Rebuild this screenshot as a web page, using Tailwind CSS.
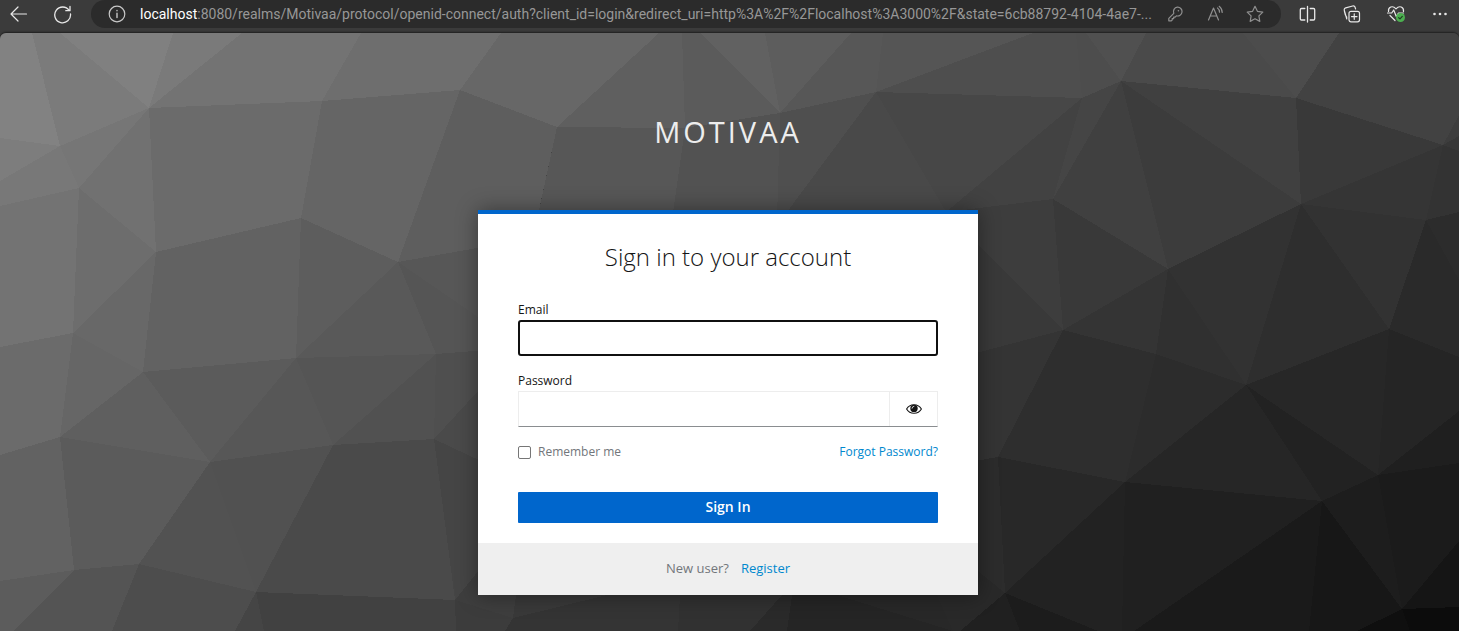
<!DOCTYPE html>
<html lang="en">
<head>
<meta charset="utf-8">
<meta name="viewport" content="width=device-width, initial-scale=1">
<title>Sign in to Motivaa</title>
<script src="https://cdn.jsdelivr.net/npm/@tailwindcss/browser@4"></script>
</head>
<body class="flex min-h-screen flex-col bg-[#3b3b3b] font-['Open_Sans',sans-serif]">

<header class="flex h-[33px] shrink-0 items-start text-[#e8e8e8]">
  <div class="flex h-7 w-[91px] shrink-0 items-center gap-6 pl-2">
    <button type="button" aria-label="Back">
      <svg class="size-5" viewBox="0 0 20 20" fill="none" stroke="currentColor" stroke-width="1.2" stroke-linecap="round" stroke-linejoin="round"><path d="M18.500 10H3M10 3L3 10l7 7"/></svg>
    </button>
    <button type="button" aria-label="Refresh">
      <svg class="size-5" viewBox="0 0 20 20" fill="none" stroke="currentColor" stroke-width="1.300" stroke-linecap="round" stroke-linejoin="round"><path d="M17.200 6.500A7.900 7.900 0 1 0 18.500 10M18 2.500v4.200h-4.200"/></svg>
    </button>
  </div>
  <div class="flex h-7 min-w-0 flex-1 items-center rounded-[14px] bg-[#2b2b2b] pr-4 pl-4">
    <button type="button" aria-label="View site information" class="mr-[13px] shrink-0 text-[#c8c8c8]">
      <svg class="size-5" viewBox="0 0 20 20" fill="none" stroke="currentColor" stroke-width="1.200" stroke-linecap="round"><circle cx="10" cy="10" r="7.800"/><path d="M10 9.200V13.500M10 6.500v.3" stroke-width="1.400"/></svg>
    </button>
    <p class="min-w-0 flex-1 truncate font-['Roboto',sans-serif] text-sm text-[#979797]"><span class="text-white">localhost</span>:8080/realms/Motivaa/protocol/openid-connect/auth?client_id=login&amp;redirect_uri=http%3A%2F%2Flocalhost%3A3000%2F&amp;state=6cb88792-4104-4ae7-...</p>
    <div class="flex shrink-0 items-center gap-5 pl-2 text-[#8f8f8f]">
      <button type="button" aria-label="Password manager">
        <svg class="size-5" viewBox="0 0 20 20" fill="none" stroke="currentColor" stroke-width="1.200" stroke-linejoin="round"><path d="M12.300 3.200a4.400 4.400 0 1 1-.9 8.600l-1.300 1.300H8.700v1.500H7.200v1.500l-.8.700H3.800v-2.500l5-5a4.400 4.400 0 0 1 3.500-6.100z"/><circle cx="13.400" cy="6.700" r=".8" fill="currentColor" stroke="none"/></svg>
      </button>
      <button type="button" aria-label="Read aloud">
        <svg class="size-5" viewBox="0 0 20 20" fill="none" stroke="currentColor" stroke-width="1.200" stroke-linecap="round" stroke-linejoin="round"><path d="M3.500 16L8.500 4l5 12M5.200 12h6.600M12.500 4c1.300 1 2 2.500 2 4.200M14.200 2.300c2 1.600 3 3.600 3 6.200"/></svg>
      </button>
      <button type="button" aria-label="Add to favorites">
        <svg class="size-5" viewBox="0 0 20 20" fill="none" stroke="currentColor" stroke-width="1.200" stroke-linejoin="round"><path d="M10 2.300l2.400 5 5.400.8-3.900 3.800.9 5.500-4.800-2.600-4.800 2.600.9-5.500L2.200 8.100l5.400-.8z"/></svg>
      </button>
    </div>
  </div>
  <div class="flex h-7 shrink-0 items-center gap-6 pr-[9px] pl-[17px]">
    <button type="button" aria-label="Split screen">
      <svg class="size-5" viewBox="0 0 20 20" fill="none" stroke="currentColor" stroke-width="1.300" stroke-linecap="round" stroke-linejoin="round"><path d="M9.500 2.500v15.500M6.800 4.500H3.500a1.200 1.200 0 0 0-1.200 1.200v9.100a1.200 1.200 0 0 0 1.200 1.200h3.300M12.200 4.500h3.300a1.200 1.200 0 0 1 1.200 1.200v9.100a1.200 1.200 0 0 1-1.200 1.200h-3.300"/></svg>
    </button>
    <button type="button" aria-label="Collections">
      <svg class="size-5" viewBox="0 0 20 20" fill="none" stroke="currentColor" stroke-width="1.200" stroke-linecap="round" stroke-linejoin="round"><rect x="7" y="7.300" width="10.500" height="10.500" rx="2"/><path d="M12.250 9.800v5.500M9.500 12.550h5.500M4.800 15L2.300 6.300a2 2 0 0 1 1.400-2.500l7-1.800a2 2 0 0 1 2.400 1.300l.5 1.700M2.300 6.300c.5 3 .5 5.200 2.500 7"/></svg>
    </button>
    <button type="button" aria-label="Browser essentials">
      <svg class="size-5" viewBox="0 0 20 20" fill="none" stroke="currentColor" stroke-width="1.200" stroke-linecap="round" stroke-linejoin="round"><path d="M2.500 7.500C2 3 6.500 1 10 4.800 13.500 1 18 3 17.500 7.500M4 11.500l5 5M1.500 9h4.200l2-3 2.600 6.500 2.200-3.500h5"/><circle cx="14.500" cy="13.500" r="4.500" fill="#4caf50" stroke="none"/><path d="M12.700 13.700l1.300 1.200 2.300-2.500" stroke="#1f3d20"/></svg>
    </button>
    <button type="button" aria-label="Settings and more">
      <svg class="size-5" viewBox="0 0 20 20" fill="currentColor"><circle cx="4.500" cy="10" r="1.300"/><circle cx="10" cy="10" r="1.300"/><circle cx="15.500" cy="10" r="1.300"/></svg>
    </button>
  </div>
</header>

<main class="relative isolate flex flex-1 flex-col items-center overflow-hidden rounded-t-md bg-[#444] pt-[79px] pr-[3px] pb-9 shadow-[0_-1px_2px_rgba(0,0,0,0.5)]">
  <!-- low-poly backdrop -->
  <svg class="absolute inset-0 -z-10 size-full" viewBox="0 33 1459 598" preserveAspectRatio="none" shape-rendering="crispEdges" aria-hidden="true">
    <path fill="#828282" d="M0 33H32L60 146 0 138z"/>
    <path fill="#7b7b7b" d="M32 33H60L149 108 60 146z"/>
    <path fill="#808080" d="M60 33H173L149 108z"/>
    <path fill="#7a7a7a" d="M173 33H242L149 108z"/>
    <path fill="#737373" d="M242 33H361L322 101 149 108z"/>
    <path fill="#6e6e6e" d="M361 33H501L460 90 322 101z"/>
    <path fill="#7d7d7d" d="M60 146L0 138V181z"/>
    <path fill="#787878" d="M60 146L79 188 0 206V181z"/>
    <path fill="#767676" d="M149 108L60 146 79 188z"/>
    <path fill="#717171" d="M149 108L79 188 156 252z"/>
    <path fill="#6d6d6d" d="M79 188L156 252 73 333z"/>
    <path fill="#737373" d="M79 188L73 333 0 347V206z"/>
    <path fill="#6b6b6b" d="M149 108L156 252 301 218 322 101z"/>
    <path fill="#656565" d="M322 101L460 90 398 262 301 218z"/>
    <path fill="#5e5e5e" d="M460 90L398 262 478 248 539 210 557 127z"/>
    <path fill="#686868" d="M156 252L73 333 143 372z"/>
    <path fill="#6b6b6b" d="M73 333L0 347V455L60 437z"/>
    <path fill="#666" d="M73 333L143 372 60 437z"/>
    <path fill="#626262" d="M156 252L301 218 296 358 143 372z"/>
    <path fill="#5d5d5d" d="M301 218L398 262 296 358z"/>
    <path fill="#595959" d="M398 262L296 358 436 354z"/>
    <path fill="#555" d="M398 262L436 354 500 349V332z"/>
    <path fill="#575757" d="M398 262L500 244V332z"/>
    <path fill="#5b5b5b" d="M143 372L296 358 210 462z"/>
    <path fill="#5f5f5f" d="M143 372L60 437 210 462z"/>
    <path fill="#575757" d="M296 358L210 462 333 445z"/>
    <path fill="#555" d="M296 358L436 354 333 445z"/>
    <path fill="#515151" d="M436 354L333 445 434 439z"/>
    <path fill="#4f4f4f" d="M436 354L434 439 500 367V349z"/>
    <path fill="#4a4a4a" d="M434 439L500 367V470z"/>
    <path fill="#5b5b5b" d="M60 437L210 462 139 564 74 570z"/>
    <path fill="#626262" d="M60 437L74 570 0 581V455z"/>
    <path fill="#5c5c5c" d="M74 570L0 581V631H13z"/>
    <path fill="#545454" d="M74 570L139 564 112 631H13z"/>
    <path fill="#525252" d="M210 462L139 564 256 592z"/>
    <path fill="#515151" d="M210 462L333 445 256 592z"/>
    <path fill="#4a4a4a" d="M333 445L434 439 455 600 256 592z"/>
    <path fill="#4d4d4d" d="M139 564L256 592 235 631H112z"/>
    <path fill="#454545" d="M256 592L235 631H264z"/>
    <path fill="#414141" d="M256 592L455 600 456 631H264z"/>
    <path fill="#454545" d="M434 439L500 470V544L455 600z"/>
    <path fill="#3e3e3e" d="M455 600L500 544V595H516L513 618z"/>
    <path fill="#3c3c3c" d="M455 600L513 618 505 631H456z"/>
    <path fill="#393939" d="M516 595H607L513 618z"/>
    <path fill="#343434" d="M513 618L607 595H680L678 631H505z"/>
    <path fill="#313131" d="M680 595H782L750 631H678z"/>
    <path fill="#2a2a2a" d="M782 595H792L787 631H750z"/>
    <path fill="#252525" d="M792 595H837L953 631H787z"/>
    <path fill="#282828" d="M837 595H937L953 631z"/>
    <path fill="#676767" d="M501 33H659L557 127 460 90z"/>
    <path fill="#5f5f5f" d="M659 33H682L685 128 557 127z"/>
    <path fill="#5b5b5b" d="M682 33H700L780 113 685 128z"/>
    <path fill="#616161" d="M700 33H765L780 113z"/>
    <path fill="#5d5d5d" d="M765 33H851L780 113z"/>
    <path fill="#575757" d="M851 33H883L876 92 780 113z"/>
    <path fill="#555" d="M883 33H1033L876 92z"/>
    <path fill="#4e4e4e" d="M1033 33H1076L1082 98 876 92z"/>
    <path fill="#4d4d4d" d="M1076 33H1086L1121 81 1082 98z"/>
    <path fill="#505050" d="M1086 33H1146L1121 81z"/>
    <path fill="#4a4a4a" d="M1146 33H1243L1296 98 1121 81z"/>
    <path fill="#4c4c4c" d="M1243 33H1339L1296 98z"/>
    <path fill="#424242" d="M1339 33H1459V115L1443 145 1296 98z"/>
    <path fill="#3d3d3d" d="M1443 145L1459 115V136z"/>
    <path fill="#373737" d="M1443 145L1459 136V151z"/>
    <path fill="#575757" d="M557 127L685 128 672 220H537z"/>
    <path fill="#525252" d="M685 128L780 113 777 220H672z"/>
    <path fill="#4f4f4f" d="M780 113L876 92 781 220H777z"/>
    <path fill="#494949" d="M876 92L781 220H946V212z"/>
    <path fill="#474747" d="M876 92L1082 98 946 212z"/>
    <path fill="#424242" d="M1082 98L946 212 1053 199z"/>
    <path fill="#454545" d="M1082 98L1121 81 1053 199z"/>
    <path fill="#404040" d="M1121 81L1053 199 1168 269z"/>
    <path fill="#3c3c3c" d="M1121 81L1168 269 1301 204z"/>
    <path fill="#404040" d="M1121 81L1301 204 1296 98z"/>
    <path fill="#393939" d="M1296 98L1443 145 1301 204z"/>
    <path fill="#353535" d="M1443 145L1301 204 1426 220z"/>
    <path fill="#333" d="M1443 145L1426 220 1459 212V151z"/>
    <path fill="#2c2c2c" d="M1426 220L1459 212V280z"/>
    <path fill="#2a2a2a" d="M1426 220L1459 280V357L1389 329z"/>
    <path fill="#323232" d="M1301 204L1426 220 1389 329z"/>
    <path fill="#2e2e2e" d="M1301 204L1389 329 1246 385z"/>
    <path fill="#323232" d="M1301 204L1168 269 1246 385z"/>
    <path fill="#3d3d3d" d="M946 212L1053 199 1063 330z"/>
    <path fill="#393939" d="M946 212L1063 330 946 361z"/>
    <path fill="#393939" d="M1053 199L1063 330 1168 269z"/>
    <path fill="#343434" d="M1063 330L1168 269 1156 354z"/>
    <path fill="#303030" d="M1168 269L1156 354 1246 385z"/>
    <path fill="#343434" d="M1063 330L946 361V466L998 457z"/>
    <path fill="#2e2e2e" d="M1063 330L1156 354 1125 482 998 457z"/>
    <path fill="#2c2c2c" d="M1156 354L1246 385 1125 482z"/>
    <path fill="#262626" d="M1246 385L1125 482 1322 501z"/>
    <path fill="#222" d="M1246 385L1322 501 1378 475z"/>
    <path fill="#272727" d="M1246 385L1378 475 1389 329z"/>
    <path fill="#252525" d="M1389 329L1378 475 1459 411V357z"/>
    <path fill="#1f1f1f" d="M1378 475L1459 411V463z"/>
    <path fill="#1b1b1b" d="M1378 475L1459 463V541L1402 609z"/>
    <path fill="#1d1d1d" d="M1322 501L1378 475 1402 609z"/>
    <path fill="#282828" d="M998 457L1125 482 1005 593z"/>
    <path fill="#2c2c2c" d="M998 457L1005 593 946 545V466z"/>
    <path fill="#222" d="M1125 482L1005 593 1098 631H1122z"/>
    <path fill="#202020" d="M1125 482L1322 501 1134 631H1122z"/>
    <path fill="#1a1a1a" d="M1322 501L1134 631H1309z"/>
    <path fill="#171717" d="M1322 501L1309 631H1357L1402 609z"/>
    <path fill="#0f0f0f" d="M1402 609L1357 631H1410z"/>
    <path fill="#0c0c0c" d="M1402 609L1410 631H1459V607z"/>
    <path fill="#151515" d="M1402 609L1459 541V607z"/>
    <path fill="#1c1c1c" d="M1005 593L1020 631H1098z"/>
    <path fill="#202020" d="M1005 593L960 631H1020z"/>
    <path fill="#292929" d="M1005 593L946 545 937 595 953 631H960z"/>
  </svg>

  <h1 class="text-[29px] leading-10 tracking-[3px] text-[#ededed] uppercase">Motivaa</h1>

  <section class="mt-[58px] w-full max-w-[500px] border-t-4 border-[#06c] bg-white shadow-[0_0_20px_rgba(3,3,3,0.4)]">
    <div class="px-10 pt-[23px] pb-5">
      <h2 class="text-center text-2xl leading-10 font-light text-[#151515]">Sign in to your account</h2>
      <form class="mt-6 text-[#151515]">
        <label for="email" class="block text-xs leading-[18px]">Email</label>
        <input id="email" type="email" class="mt-px block h-9 w-full rounded-[3px] border-2 border-[#101010] px-2 text-sm outline-none">

        <label for="password" class="mt-4 block text-xs leading-[18px]">Password</label>
        <div class="mt-px flex h-9 border border-[#ededed] border-b-[#8a8d90]">
          <input id="password" type="password" class="min-w-0 flex-1 px-2 text-sm outline-none">
          <button type="button" aria-label="Show password" class="flex w-12 items-center justify-center border-l border-[#ededed]">
            <svg class="h-4 w-4" viewBox="0 0 16 16" aria-hidden="true"><path d="M.6 8C2.200 5.200 4.900 3.700 8 3.700S13.800 5.200 15.400 8C13.800 10.800 11.100 12.300 8 12.300S2.200 10.800.6 8z" fill="#fff" stroke="#151515" stroke-width="1.100"/><circle cx="8" cy="7.400" r="3.700" fill="#151515"/><path d="M6 7.200A2 2 0 0 1 7.900 5.300" fill="none" stroke="#fff" stroke-width=".8" stroke-linecap="round"/></svg>
          </button>
        </div>

        <div class="mt-4 flex items-center justify-between text-xs leading-[18px]">
          <label for="remember" class="flex items-center gap-[7px] text-[#72767b]">
            <input id="remember" type="checkbox" class="size-[13px] appearance-none rounded-[2px] border border-[#767676] bg-white">
            Remember me
          </label>
          <a href="#" class="text-[#0088ce]">Forgot Password?</a>
        </div>

        <button type="submit" class="mt-[31px] block h-[31px] w-full rounded-[1px] bg-[#06c] pb-0.5 text-sm font-semibold text-white">Sign In</button>
      </form>
    </div>
    <footer class="flex h-[52px] items-center justify-center gap-3 bg-[#efefef] text-[13px] text-[#72767b]">
      <span>New user?</span>
      <a href="#" class="text-[#0088ce]">Register</a>
    </footer>
  </section>
</main>
</body>
</html>
